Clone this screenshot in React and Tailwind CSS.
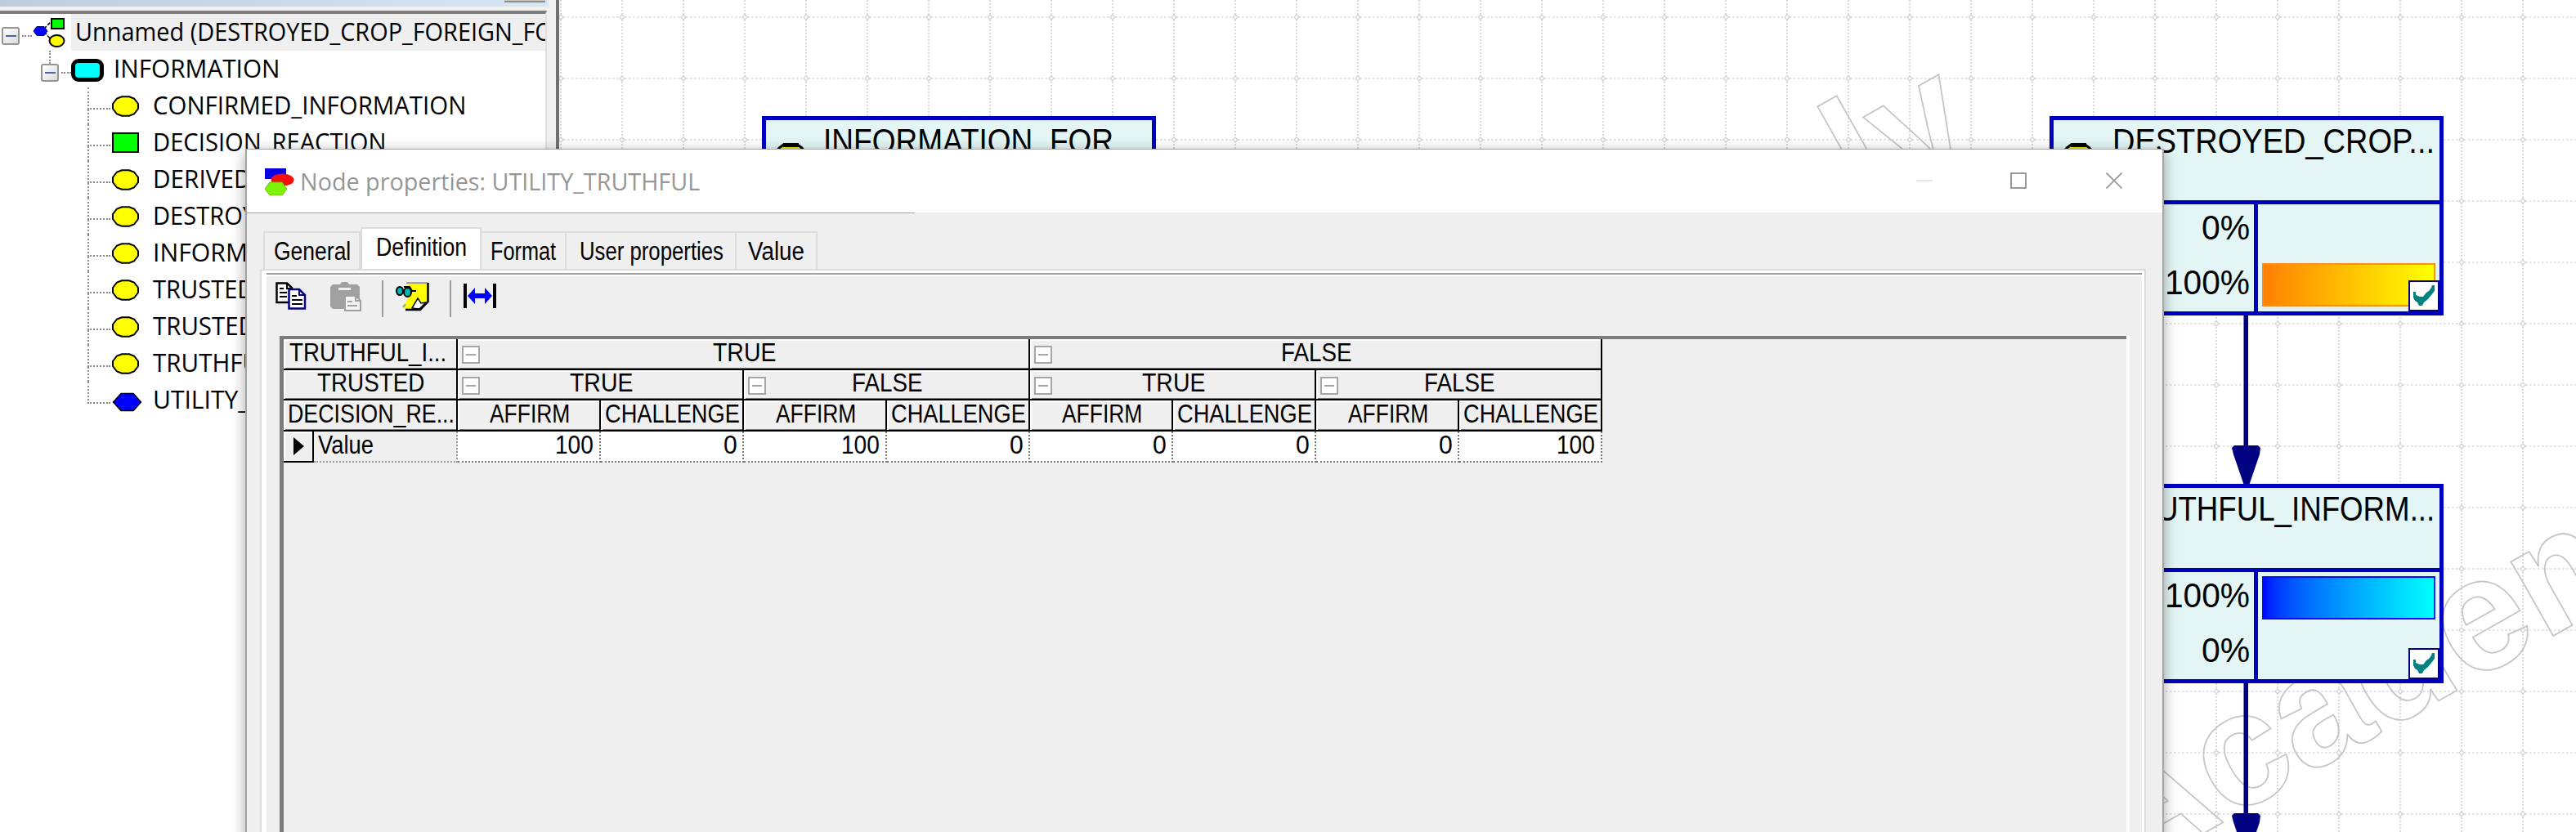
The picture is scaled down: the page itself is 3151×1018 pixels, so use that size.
import { useLayoutEffect, useRef, useState } from "react";

/* Text stretched horizontally to a given width. */
function Fit({ w, className = "", children }) {
  const ref = useRef(null);
  const [scale, setScale] = useState(1);
  useLayoutEffect(() => {
    const n = ref.current.offsetWidth;
    if (n) setScale(w / n);
  }, [w, children]);
  return (
    <span className="inline-block shrink-0 text-left" style={{ width: w }}>
      <span
        ref={ref}
        className={"inline-block origin-left whitespace-pre " + className}
        style={{ transform: `scaleX(${scale})` }}
      >
        {children}
      </span>
    </span>
  );
}

const TREE_FONT = "font-['Open_Sans',sans-serif] text-[30.5px] leading-[45px] text-black";

function TreeExpander() {
  return (
    <div className="flex h-[22px] w-[22px] shrink-0 items-center justify-center rounded-[3px] border-2 border-[#959595] bg-gradient-to-br from-white to-[#dcdcdc]">
      <div className="h-[2px] w-[13px] bg-[#4a63b8]" />
    </div>
  );
}

function ProjectIcon() {
  return (
    <svg className="h-[38px] w-[40px] shrink-0" viewBox="0 0 40 38">
      <path d="M14 14L22 6M14 18L23 28" stroke="#000" strokeWidth="1.6" strokeDasharray="4 2" />
      <polygon points="1,17 5,11.500 14,11.500 18,17 14,22.500 5,22.500" fill="#00f" stroke="#000080" />
      <rect x="23" y="2" width="15" height="12" fill="#0f0" stroke="#000" strokeWidth="2" />
      <ellipse cx="29.500" cy="29" rx="9" ry="7" fill="#ff0" stroke="#000" strokeWidth="2" />
    </svg>
  );
}

function NodeIcon({ kind }) {
  if (kind === "decision")
    return <div className="h-[25px] w-[33px] shrink-0 border-2 border-black bg-[#00ff00]" />;
  if (kind === "utility")
    return (
      <svg className="mt-1 h-[24px] w-[37px] shrink-0" viewBox="0 0 37 24">
        <polygon points="1.500,12 11,1.500 26,1.500 35.500,12 26,22.500 11,22.500" fill="#00f" stroke="#000" strokeWidth="1.500" />
      </svg>
    );
  return (
    <svg className="h-[26px] w-[33px] shrink-0" viewBox="0 0 33 26">
      <polygon
        points="12,1.200 21,1.200 27,3.500 30.500,8 32,10 32,16 30.500,18 27,22.500 21,24.800 12,24.800 6,22.500 2.500,18 1,16 1,10 2.500,8 6,3.500"
        fill="#ff0"
        stroke="#000"
        strokeWidth="2"
      />
    </svg>
  );
}

const TREE = [
  ["CONFIRMED_INFORMATION", "chance", 383],
  ["DECISION_REACTION", "decision", 285],
  ["DERIVED_INFORMATION", "chance", 337],
  ["DESTROYED_CROP_FOREIGN", "chance", 388],
  ["INFORMATION_FOREIGN", "chance", 348],
  ["TRUSTED", "chance", 124],
  ["TRUSTED_SOURCE", "chance", 252],
  ["TRUTHFUL_INFORMATION", "chance", 362],
  ["UTILITY_TRUTHFUL", "utility", 266],
];

function Sidebar() {
  return (
    <aside className="flex h-full w-[684px] shrink-0 flex-col border-r-[4px] border-[#707070] bg-[#f0f0f0]">
      <div className="flex h-[8px] w-[671px] shrink-0 justify-end bg-gradient-to-r from-[#bfcddb] to-[#d8e5f2] pr-[4px]">
        <div className="h-[3px] w-[50px] border-b-2 border-[#8c8c8c] bg-[#c8c8c8]" />
      </div>
      <div className="mt-[5px] flex w-[669px] flex-1 flex-col overflow-hidden border-t-[4px] border-r-2 border-t-[#7d7d7d] border-r-[#e0e0e0] bg-white">
        <div className="flex h-[45px] shrink-0 items-center pl-[2px]">
          <div className="pt-[9px]">
            <TreeExpander />
          </div>
          <div className="mt-[9px] mr-[1px] ml-[3px] w-[12px] border-t-2 border-dotted border-[#8a8a8a]" />
          <ProjectIcon />
          <div className="ml-[7px] flex h-full flex-1 items-center overflow-hidden bg-[#efefef] pb-[2px] pl-[5px]">
            <Fit w={593} className={TREE_FONT}>Unnamed (DESTROYED_CROP_FOREIGN_FO)</Fit>
          </div>
        </div>
        <div className="flex h-[45px] shrink-0 items-center pl-[50px]">
          <div className="flex h-full flex-col">
            <div className="ml-[10px] h-[16px] border-l-2 border-dotted border-[#8a8a8a]" />
            <TreeExpander />
          </div>
          <div className="mt-[9px] ml-[3px] w-[12px] border-t-2 border-dotted border-[#8a8a8a]" />
          <div className="mt-[3px] h-[28px] w-[40px] rounded-[9px] border-[5px] border-black bg-[#00ffff]" />
          <div className="ml-[12px] pb-[2px]">
            <Fit w={204} className={TREE_FONT}>INFORMATION</Fit>
          </div>
        </div>
        {TREE.map(([label, kind, w], i) => (
          <div key={i} className="flex h-[45px] shrink-0 items-center pl-[107px]">
            <div className="flex h-full w-[30px] flex-col">
              <div className="h-[27px] w-[28px] border-b-2 border-l-2 border-dotted border-[#8a8a8a]" />
              {i < TREE.length - 1 && (
                <div className="flex-1 border-l-2 border-dotted border-[#8a8a8a]" />
              )}
            </div>
            <div className="flex w-[50px] items-center">
              <NodeIcon kind={kind} />
            </div>
            <div className="pb-[2px]">
              <Fit w={w} className={TREE_FONT}>{label}</Fit>
            </div>
          </div>
        ))}
      </div>
    </aside>
  );
}

const GRID_X = Array.from({ length: 34 }, (_, i) => 2 + i * 75);
const GRID_Y = Array.from({ length: 14 }, (_, i) => 21 + i * 75);
const WM = "fill-none stroke-[#c6c6c6] font-['Liberation_Sans',sans-serif] text-[100px] font-bold";

function CanvasBackdrop() {
  return (
    <svg className="absolute inset-0 h-[1018px] w-[2467px]" viewBox="0 0 2467 1018">
      {GRID_X.map((x) => (
        <line key={x} x1={x} x2={x} y1="0" y2="1018" stroke="#dadada" strokeWidth="2" strokeDasharray="2 2" />
      ))}
      {GRID_Y.map((y) => (
        <line key={y} y1={y} y2={y} x1="0" x2="2467" stroke="#dadada" strokeWidth="1.500" strokeDasharray="2.500 2.500" />
      ))}
      {GRID_X.map((x) =>
        GRID_Y.map((y) => (
          <path key={x + "-" + y} d={`M${x - 3} ${y}l3 -3l3 3l-3 3z`} fill="#fff" stroke="#d4d4d4" strokeWidth="1.300" />
        ))
      )}
      <text transform="matrix(1.700 -0.960 0.970 1.720 1917 1073)" className={WM} strokeWidth="0.900">Academic</text>
      <text transform="matrix(1.700 -0.960 0.970 1.720 1390 379)" className={WM} strokeWidth="0.900">only</text>
      <g fill="#000080">
        <rect x="2060.500" y="385" width="5.500" height="162" />
        <polygon points="2046,548 2049,545 2078,545 2081,548 2080,556 2067,594 2061,594 2048,556" />
        <rect x="2060.500" y="835" width="5.500" height="162" />
        <polygon points="2046,998 2049,995 2078,995 2081,998 2080,1006 2067,1044 2061,1044 2048,1006" />
      </g>
    </svg>
  );
}

const NODE_FONT = "font-['Liberation_Sans',sans-serif] text-[43px] leading-[50px] text-black";

function ModelNode({ className, title, titleWidth, values = [] }) {
  return (
    <div className={"absolute flex h-[244px] w-[482px] flex-col border-[5px] border-[#0000c0] bg-[#e3f5f5] " + className}>
      <div className="relative flex h-[98px] shrink-0 justify-end pr-[6px]">
        <div className="absolute top-[28px] left-[10px]">
          <svg className="h-[32px] w-[40px]" viewBox="0 0 40 32">
            <polygon points="12,1.500 28,1.500 34,6 38,11 38,21 34,26 28,30.500 12,30.500 6,26 2,21 2,11 6,6" fill="#e8e800" stroke="#000" strokeWidth="3" />
            <rect x="11" y="0" width="19" height="5" />
          </svg>
        </div>
        <Fit w={titleWidth} className={NODE_FONT}>{title}</Fit>
      </div>
      <div className="flex h-[136px] shrink-0 border-t-[5px] border-[#0000c0]">
        <div className="flex w-[245px] flex-col items-end pt-[3px] pr-[5px]">
          {values.map((v, i) => (
            <div key={i} className="h-[67px] shrink-0">
              <Fit w={v === "0%" ? 59 : 104} className={NODE_FONT}>{v}</Fit>
            </div>
          ))}
        </div>
        <div className="relative flex flex-1 flex-col border-l-[5px] border-[#0000c0] pt-[5px] pl-[5px]">
          {values.map((v, i) => (
            <div key={i} className="h-[67px] shrink-0">
              {v === "100%" && (
                <div
                  className={
                    i === 0
                      ? "h-[53px] w-[212px] border-2 border-[#0010ff] bg-gradient-to-r from-[#0000ff] to-[#00ffff]"
                      : "h-[53px] w-[212px] border-2 border-[#ff8c1a] bg-gradient-to-r from-[#ff8000] to-[#ffff00]"
                  }
                />
              )}
            </div>
          ))}
          <div className="absolute right-0 bottom-0 flex h-[38px] w-[38px] items-center justify-center border-2 border-[#000080] bg-white">
            <svg className="h-[26px] w-[26px]" viewBox="0 0 26 26">
              <polygon points="0,8 3,8 3,12 8,14 12,14 16,9 19,7 22,3 23,0 26,0 26,7 22,12 18,17 13,21 11,25 7,25 5,21 2,19 0,15" fill="#008080" />
            </svg>
          </div>
        </div>
      </div>
    </div>
  );
}

function Canvas() {
  return (
    <main className="relative h-full flex-1 overflow-hidden bg-white">
      <CanvasBackdrop />
      <ModelNode className="top-[142px] left-[248px]" title="INFORMATION_FOR    " titleWidth={396} />
      <ModelNode className="top-[142px] left-[1823px]" title="DESTROYED_CROP..." titleWidth={394} values={["0%", "100%"]} />
      <ModelNode className="top-[592px] left-[1823px]" title="TRUTHFUL_INFORM..." titleWidth={389} values={["100%", "0%"]} />
    </main>
  );
}

const UI_FONT = "font-['Liberation_Sans',sans-serif] text-[31px] leading-[36px] text-black";

function Tab({ label, w, className }) {
  return (
    <div className={"flex h-[46px] items-center justify-center border-t-2 border-r-2 border-[#dcdcdc] pt-[2px] " + className}>
      <Fit w={w} className={UI_FONT}>{label}</Fit>
    </div>
  );
}

function CopyIcon() {
  return (
    <svg className="h-[34px] w-[38px]" viewBox="0 0 38 34">
      <path d="M1.500 1.500H14L20 7V25H1.500z" fill="#fff" stroke="#000" strokeWidth="2.500" />
      <path d="M14 1.500V8H20M5 8H10M5 13H14M5 18H14" fill="none" stroke="#000" strokeWidth="2" />
      <path d="M16.500 9H29L36 16V32.500H16.500z" fill="#fff" stroke="#000080" strokeWidth="2.500" />
      <path d="M29 9V16H36" fill="none" stroke="#000080" strokeWidth="2" />
      <path d="M20 17H26M20 22H33M20 27H33" stroke="#000" strokeWidth="2" />
    </svg>
  );
}

function PasteIcon() {
  return (
    <svg className="h-[36px] w-[38px]" viewBox="0 0 38 36">
      <path d="M3 3H12L14 0H21L23 3H33L36 6V33H3L0 30V6z" fill="#a0a0a0" />
      <rect x="10" y="7" width="15" height="3" fill="#efefef" />
      <path d="M18 17H31L37 23V35H18z" fill="#f4f4f4" stroke="#a0a0a0" strokeWidth="2" />
      <path d="M31 17V23H37M21 24H27M21 29H33" fill="none" stroke="#a0a0a0" strokeWidth="2" />
    </svg>
  );
}

function NoteIcon() {
  return (
    <svg className="h-[36px] w-[41px]" viewBox="0 0 41 36">
      <path d="M14 1H39V24L30 34H12L9 31L15 20V14z" fill="#ff0" />
      <path d="M13 1.200H39" stroke="#999" strokeWidth="2" />
      <path d="M39.500 1V24L30 34H12" fill="none" stroke="#000" strokeWidth="2.500" />
      <path d="M20 32L27 20L31 26L37 25L29 33z" fill="#fff" stroke="#000" strokeWidth="1.500" />
      <path d="M9 31L12 27" stroke="#999" strokeWidth="2" />
      <ellipse cx="5" cy="11" rx="4" ry="5" fill="#00b4b4" stroke="#000" strokeWidth="2" />
      <ellipse cx="14.500" cy="12.500" rx="4.500" ry="5.500" fill="#00b4b4" stroke="#000" strokeWidth="2" />
      <path d="M10 6H17L20 11H25" fill="none" stroke="#000" strokeWidth="2" />
    </svg>
  );
}

function FitWidthIcon() {
  return (
    <svg className="h-[30px] w-[40px]" viewBox="0 0 40 30">
      <path d="M2 0V30M38 0V30" stroke="#000" strokeWidth="4" />
      <path d="M5 15L14 5V12H26V5L35 15L26 25V18H14V25z" fill="#00f" />
    </svg>
  );
}

function MinusBox() {
  return (
    <div className="absolute top-[8px] left-[5px] flex h-[22px] w-[22px] items-center justify-center border-2 border-[#a6a6a6] bg-white">
      <div className="h-[2px] w-[12px] bg-[#a6a6a6]" />
    </div>
  );
}

const HEAD =
  "relative flex items-center justify-center border-r-2 border-b-2 border-black pb-[3px] pl-[2px] shadow-[inset_2px_2px_0_#fcfcfc,inset_0_-1px_0_#777]";

function HeadCell({ label, w, span = "", toggle = false }) {
  return (
    <div className={HEAD + " " + span}>
      {toggle && <MinusBox />}
      <Fit w={w} className={UI_FONT}>{label}</Fit>
    </div>
  );
}

const VALUES = [100, 0, 100, 0, 0, 0, 0, 100];

function DefinitionGrid() {
  return (
    <div className="ml-[22px] flex-1 border-t-[4px] border-l-[5px] border-t-[#7c7c7c] border-l-[#7c7c7c]">
      <div className="grid w-max grid-cols-[213px_175px_175px_175px_175px_175px_175px_175px_175px] grid-rows-[38px_37px_38px_38px]">
        <HeadCell label="TRUTHFUL_I... " w={200} />
        <HeadCell label="TRUE" w={77} span="col-span-4" toggle />
        <HeadCell label="FALSE" w={87} span="col-span-4" toggle />
        <HeadCell label="TRUSTED" w={131} />
        <HeadCell label="TRUE" w={77} span="col-span-2" toggle />
        <HeadCell label="FALSE" w={87} span="col-span-2" toggle />
        <HeadCell label="TRUE" w={77} span="col-span-2" toggle />
        <HeadCell label="FALSE" w={87} span="col-span-2" toggle />
        <HeadCell label="DECISION_RE..." w={204} />
        {[0, 1, 2, 3].flatMap((k) => [
          <HeadCell key={"a" + k} label="AFFIRM" w={98} />,
          <HeadCell key={"c" + k} label="CHALLENGE" w={165} />,
        ])}
        <div className="flex">
          <div className="flex w-[37px] items-center justify-center border-r-2 border-b-2 border-black pl-[2px] shadow-[inset_2px_2px_0_#fcfcfc]">
            <svg className="h-[22px] w-[13px]" viewBox="0 0 13 22">
              <polygon points="0,0 13,11 0,22" />
            </svg>
          </div>
          <div className="flex flex-1 items-center border-r-2 border-b-2 border-dotted border-[#999] pb-[2px] pl-[5px]">
            <Fit w={68} className={UI_FONT}>Value</Fit>
          </div>
        </div>
        {VALUES.map((v, i) => (
          <div
            key={i}
            className="flex items-center justify-end border-r-2 border-b-2 border-dotted border-[#777] bg-white pr-[7px] pb-[2px]"
          >
            <Fit w={v ? 47 : 16.5} className={UI_FONT}>{String(v)}</Fit>
          </div>
        ))}
      </div>
    </div>
  );
}

function Dialog() {
  return (
    <section className="absolute top-[182px] left-[300px] flex h-[900px] w-[2347px] flex-col border-[2px] border-t border-[#a3a3a3] bg-[#efefef] shadow-[0_4px_16px_rgba(0,0,0,0.35)]">
      <header className="flex h-[77px] shrink-0 items-center bg-white pl-[22px]">
        <svg className="h-[34px] w-[36px]" viewBox="0 0 36 34">
          <rect x="0" y="1" width="26" height="13" fill="#0a00e6" />
          <ellipse cx="21.500" cy="15" rx="14" ry="7.500" fill="#f51010" />
          <polygon points="0,26 6,18 21,18 27,26 21,34 6,34" fill="#7df205" stroke="#5fc40a" strokeWidth="1" />
        </svg>
        <div className="mt-[1px] ml-[7px]">
          <Fit w={489} className="font-['Open_Sans',sans-serif] text-[29.5px] leading-[40px] text-[#969696]">
            Node properties: UTILITY_TRUTHFUL
          </Fit>
        </div>
        <div className="mr-[49px] ml-auto flex items-center pb-[2px]">
          <div className="h-[2px] w-[20px] bg-[#e6e6e6]" />
          <div className="ml-[95px] h-[20px] w-[20px] border-2 border-[#999]" />
          <svg className="ml-[97px] h-[20px] w-[20px]" viewBox="0 0 20 20">
            <path d="M0.500 0.500L19.500 19.500M19.500 0.500L0.500 19.500" stroke="#999" strokeWidth="1.800" />
          </svg>
        </div>
      </header>
      <div className="h-px w-[817px] shrink-0 bg-[#a3a3a3]" />
      <div className="mt-[17px] ml-[20px] flex h-[51px] shrink-0 items-end">
        <Tab label="General" w={94} className="w-[119px] border-l-2 border-r-0" />
        <div className="flex h-[51px] w-[148px] items-start justify-center border-x-2 border-t-2 border-[#dcdcdc] bg-white pt-[5px]">
          <Fit w={111} className={UI_FONT}>Definition</Fit>
        </div>
        <Tab label="Format" w={80} className="w-[104px]" />
        <Tab label="User properties" w={176} className="w-[208px] pl-[2px]" />
        <Tab label="Value" w={69} className="w-[99px]" />
      </div>
      <div className="mr-[20px] ml-[16px] flex flex-1 flex-col border-x-2 border-t-2 border-[#dcdcdc] bg-white pt-[3px] pr-[3px] pl-[6px]">
        <div className="flex flex-1 flex-col border-t-[2px] border-[#a0a0a0] bg-[#efefef] shadow-[inset_0_2px_0_#fff]">
          <div className="flex h-[75px] shrink-0 items-start pt-[9px] pl-[11px]">
            <CopyIcon />
            <div className="ml-[29px]">
              <PasteIcon />
            </div>
            <div className="-mt-[2px] ml-[25px] h-[45px] w-[2px] bg-[#9c9c9c]" />
            <div className="ml-[15px]">
              <NoteIcon />
            </div>
            <div className="-mt-[2px] ml-[25px] h-[45px] w-[2px] bg-[#9c9c9c]" />
            <div className="mt-[2px] ml-[15px]">
              <FitWidthIcon />
            </div>
          </div>
          <div className="-ml-[6px] flex flex-1 pr-[15px]">
            <div className="-mr-px w-[6px] shrink-0 bg-white" />
            <div className="-ml-[5px] flex flex-1 border-r-[4px] border-white">
              <DefinitionGrid />
            </div>
          </div>
        </div>
      </div>
    </section>
  );
}

export default function App() {
  return (
    <div className="relative flex h-[1018px] w-[3151px] overflow-hidden bg-white">
      <Sidebar />
      <Canvas />
      <Dialog />
    </div>
  );
}
